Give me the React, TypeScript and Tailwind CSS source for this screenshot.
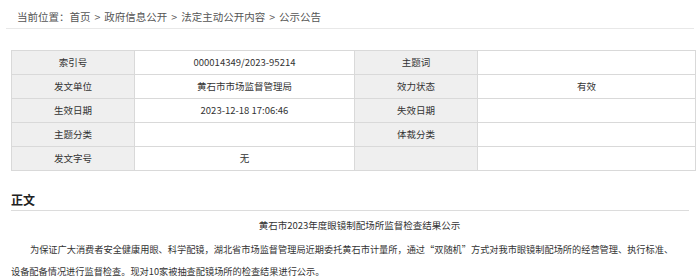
const font = { fontFamily: '"Noto Sans CJK SC", "Liberation Sans", sans-serif' };

const rows: [string, string, string, string][] = [
  ["索引号", "000014349/2023-95214", "主题词", ""],
  ["发文单位", "黄石市市场监督管理局", "效力状态", "有效"],
  ["生效日期", "2023-12-18 17:06:46", "失效日期", ""],
  ["主题分类", "", "体裁分类", ""],
  ["发文字号", "无", "", ""],
];

const crumbs = ["首页", "政府信息公开", "法定主动公开内容", "公示公告"];

export default function App() {
  return (
    <div className="w-[700px] h-[279px] bg-white text-[#333] overflow-hidden" style={font}>
      {/* Breadcrumb */}
      <div className="mx-[6px] h-[29px] pl-[11px] pt-[9px] border-b border-[#e8e8e8] text-[10.5px] leading-[16px] text-[#555] flex">
        <span>当前位置：</span>
        {crumbs.map((c, i) => (
          <span key={c} className="flex">
            {i > 0 && <span className="px-[4px]">&gt;</span>}
            <span>{c}</span>
          </span>
        ))}
      </div>

      {/* Info table */}
      <table className="ml-[11px] mt-[21px] w-[685px] border-collapse table-fixed text-[9.5px] text-[#333]">
        <colgroup>
          <col className="w-[123px]" />
          <col className="w-[220px]" />
          <col className="w-[123px]" />
          <col />
        </colgroup>
        <tbody>
          {rows.map((r, i) => (
            <tr key={i} className="h-[24px]">
              <td className="border border-[#d9d9d9] bg-[#efefef] text-center">{r[0]}</td>
              <td className="border border-[#d9d9d9] text-center">{r[1]}</td>
              <td className="border border-[#d9d9d9] bg-[#efefef] text-center">{r[2]}</td>
              <td className="border border-[#d9d9d9] text-center">{r[3]}</td>
            </tr>
          ))}
        </tbody>
      </table>

      {/* Body */}
      <div className="mx-[11px] mt-[18px]">
        <div className="h-[22px] border-b border-[#dcdcdc] text-[12px] font-bold leading-[22px] text-[#222]">
          正文
        </div>
        <p className="mt-[7px] indent-[19px] text-center text-[9.5px] leading-[14px] text-[#333]">
          黄石市2023年度眼镜制配场所监督检查结果公示
        </p>
        <p className="mt-[6px] pr-[10px] indent-[19px] text-[9.2px] leading-[22px] text-[#333]">
          为保证广大消费者安全健康用眼、科学配镜，湖北省市场监督管理局近期委托黄石市计量所，通过“双随机”方式对我市眼镜制配场所的经营管理、执行标准、设备配备情况进行监督检查。现对10家被抽查配镜场所的检查结果进行公示。
        </p>
      </div>
    </div>
  );
}
